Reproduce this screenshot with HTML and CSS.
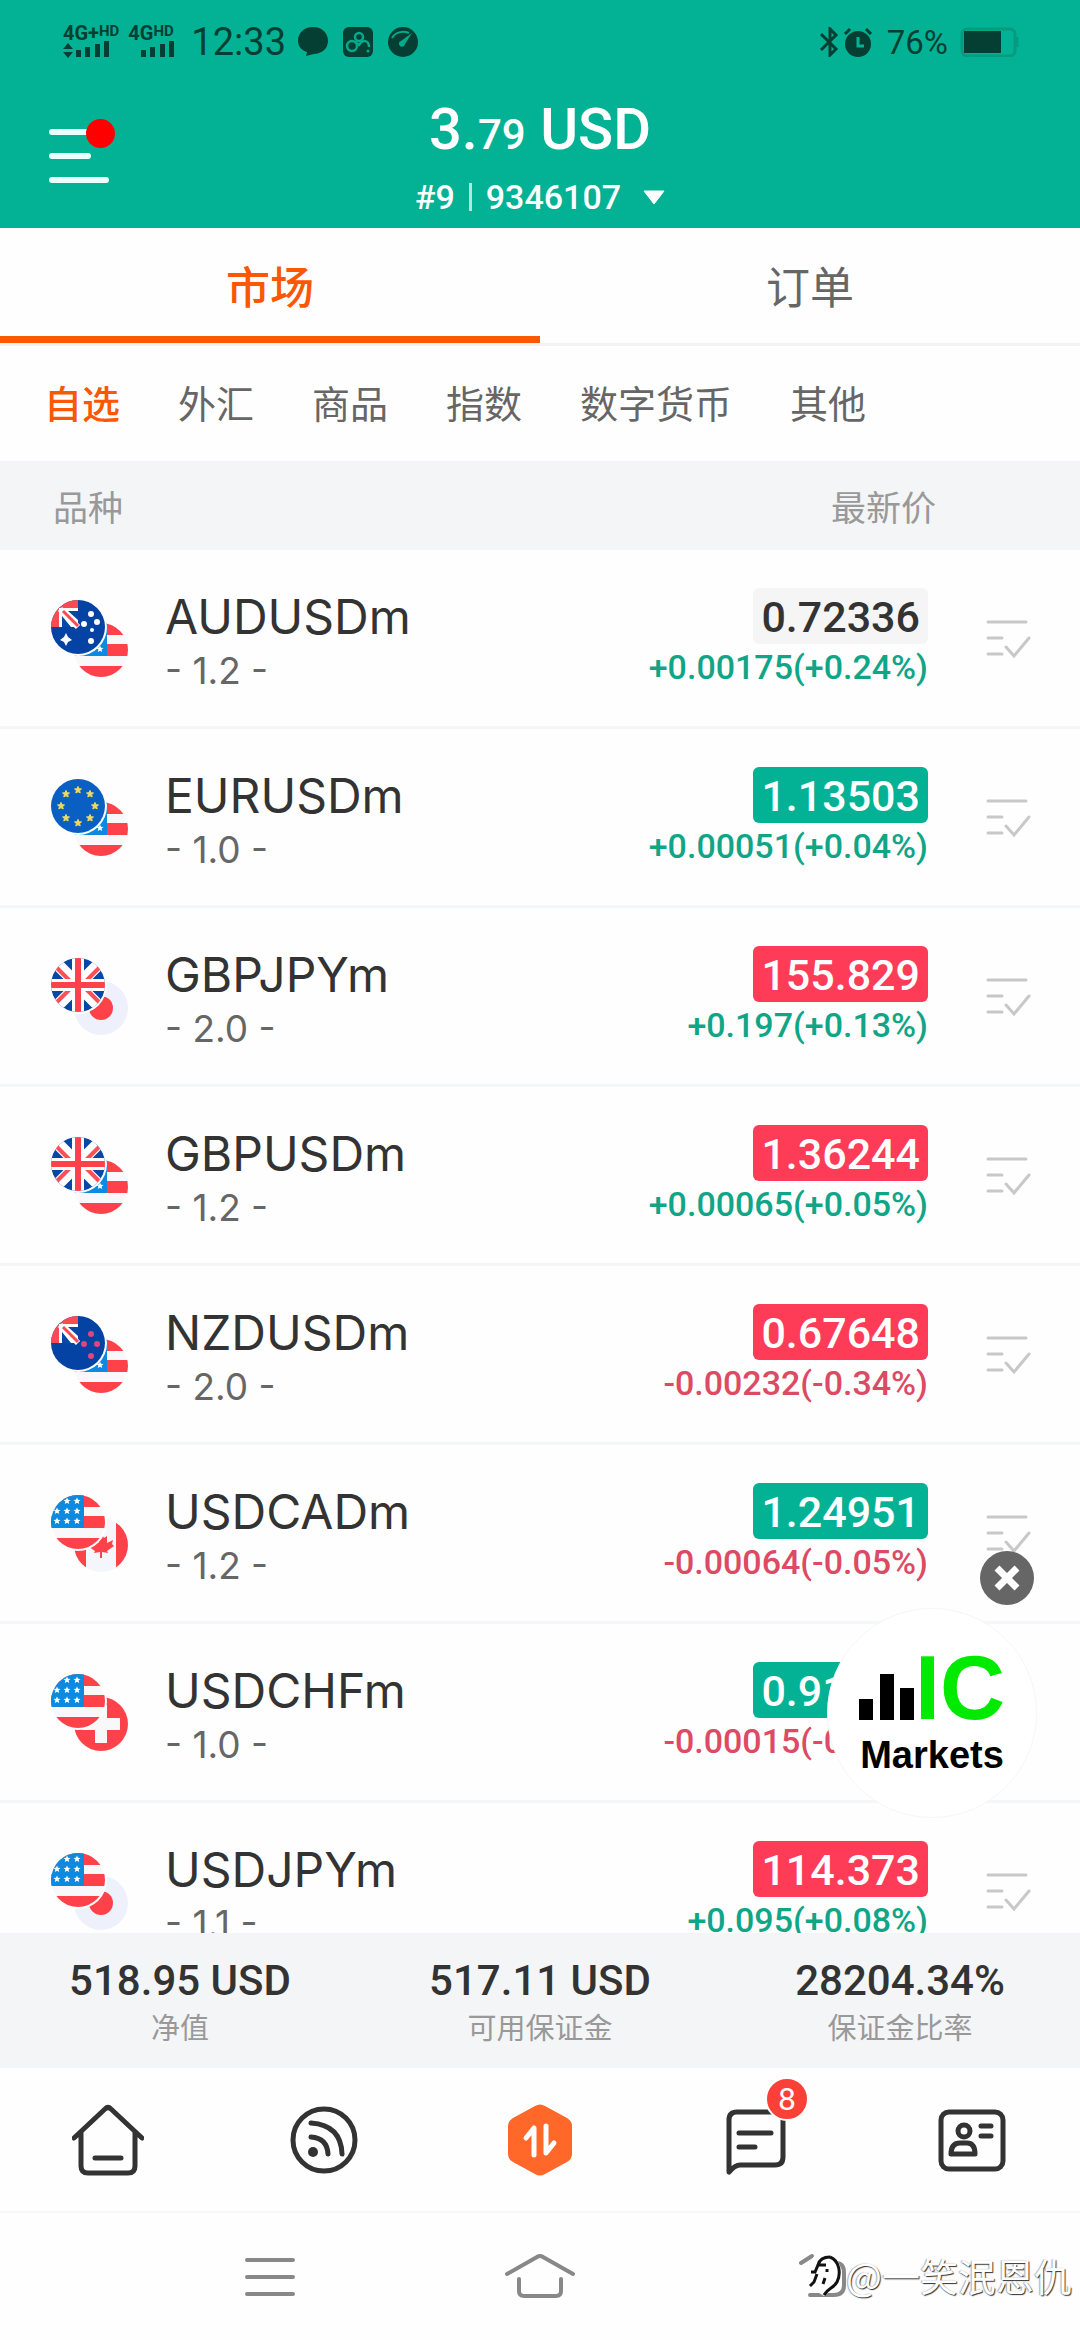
FILE: index.html
```html
<!DOCTYPE html>
<html lang="zh-CN">
<head>
  <meta charset="UTF-8" />
  <meta name="viewport" content="width=device-width, initial-scale=1.0"/>
  <title>市场</title>
  <link rel="stylesheet" href="styles.css">
</head>
<body>
  <!-- banderas e iconos compartidos -->
  <svg class="defs" aria-hidden="true">
    <defs>
      <clipPath id="round"><circle cx="27" cy="27" r="27"/></clipPath>
      <path id="star" d="M0 -3.6 L1 -1.2 L3.5 -1.1 L1.6 .6 L2.2 3 L0 1.7 L-2.2 3 L-1.6 .6 L-3.5 -1.1 L-1 -1.2Z"/>
      <symbol id="us" viewBox="0 0 54 54">
        <g clip-path="url(#round)">
          <rect width="54" height="54" fill="#f8f8fb"/>
          <path d="M0 0H54V12H0Z M0 21H54V33H0Z M0 43H54V54H0Z" fill="#ff4249"/>
          <rect width="33" height="33" fill="#0d8ae0"/>
          <g fill="#fff">
            <use href="#star" x="16" y="6"/><use href="#star" x="26" y="6"/>
            <use href="#star" x="6" y="16"/><use href="#star" x="16" y="16"/><use href="#star" x="26" y="16"/>
            <use href="#star" x="6" y="26"/><use href="#star" x="16" y="26"/><use href="#star" x="26" y="26"/>
          </g>
        </g>
      </symbol>
      <symbol id="gb" viewBox="0 0 54 54">
        <g clip-path="url(#round)">
          <rect width="54" height="54" fill="#0747a6"/>
          <path d="M0 0L54 54M54 0L0 54" stroke="#fff" stroke-width="12"/>
          <path d="M4 8L22 26M50 8L32 26M4 46L22 28M50 46L32 28" stroke="#fb5058" stroke-width="4"/>
          <path d="M27 0V54M0 27H54" stroke="#fff" stroke-width="12"/>
          <path d="M27 0V54M0 27H54" stroke="#ff4249" stroke-width="6"/>
        </g>
      </symbol>
      <g id="jack">
        <rect width="27" height="27" fill="#fb4a54"/>
        <rect x="8" y="8" width="19" height="19" fill="#fff"/>
        <path d="M17 11H27V20Z M11 16V27H20Z" fill="#0747a6"/>
        <path d="M9 9L27 27" stroke="#fff" stroke-width="6"/>
        <path d="M12 11L27 26" stroke="#fb4a54" stroke-width="3"/>
      </g>
      <symbol id="au" viewBox="0 0 54 54">
        <g clip-path="url(#round)">
          <rect width="54" height="54" fill="#0443a4"/>
          <use href="#jack"/>
          <path d="M15 33L17 37L21 40L17 42L15 46L13 42L9 40L13 37Z" fill="#fff"/>
          <g fill="#fff"><circle cx="40" cy="14" r="3"/><circle cx="46" cy="22" r="3"/><circle cx="33" cy="24" r="3"/><circle cx="41" cy="30" r="2"/><circle cx="40" cy="41" r="3"/></g>
        </g>
      </symbol>
      <symbol id="nz" viewBox="0 0 54 54">
        <g clip-path="url(#round)">
          <rect width="54" height="54" fill="#0443a4"/>
          <use href="#jack"/>
          <g fill="#e0457b"><circle cx="40" cy="18" r="3"/><circle cx="33" cy="28" r="3"/><circle cx="46" cy="28" r="3"/><circle cx="40" cy="40" r="3"/></g>
        </g>
      </symbol>
      <symbol id="eu" viewBox="0 0 54 54">
        <circle cx="27" cy="27" r="27" fill="#0a60c2"/>
        <g fill="#f1dc55" stroke="#f1dc55">
          <use href="#star" x="27" y="11"/><use href="#star" x="39" y="15"/><use href="#star" x="44" y="27"/><use href="#star" x="39" y="39"/>
          <use href="#star" x="27" y="44"/><use href="#star" x="15" y="39"/><use href="#star" x="10" y="27"/><use href="#star" x="15" y="15"/>
        </g>
      </symbol>
      <symbol id="jp" viewBox="0 0 54 54">
        <circle cx="27" cy="27" r="27" fill="#eef1fb"/>
        <circle cx="27" cy="27" r="12" fill="#ff4249"/>
      </symbol>
      <symbol id="ca" viewBox="0 0 54 54">
        <g clip-path="url(#round)">
          <rect width="54" height="54" fill="#f5f6fb"/>
          <path d="M0 0H12V54H0Z M42 0H54V54H42Z" fill="#ff4249"/>
          <path d="M27 15L30 20L33 18L33 25L39 22L38 26L40 28L33 33L34 35L28 34V40H26V34L20 35L21 33L14 28L16 26L15 22L21 25L21 18L24 20Z" fill="#ff4249"/>
        </g>
      </symbol>
      <symbol id="ch" viewBox="0 0 54 54">
        <circle cx="27" cy="27" r="27" fill="#ff4249"/>
        <path d="M21 8H33V21H46V33H33V46H21V33H8V21H21Z" fill="#f8f8fb"/>
      </symbol>
      <symbol id="check" viewBox="0 0 46 40">
        <path d="M2 3H40M2 19H16M2 35H16M20 28L28 37L43 19" fill="none" stroke="#c8c8c8" stroke-width="3" stroke-linecap="round"/>
      </symbol>
    </defs>
  </svg>

  <header class="top">
    <div class="status">
      <div class="signal">
        <span class="net">4G+<small>HD</small></span>
        <svg width="48" height="18" viewBox="0 0 48 18"><path d="M0 8L5 2L10 8Z M0 11L5 17L10 11Z M13 9H18V16H13Z M22 6H27V16H22Z M32 3H37V16H32Z M41 0H46V16H41Z" fill="#053f33"/></svg>
      </div>
      <div class="signal">
        <span class="net">4G<small>HD</small></span>
        <svg width="48" height="18" viewBox="0 0 48 18"><path d="M13 9H18V16H13Z M22 6H27V16H22Z M32 3H37V16H32Z M41 0H46V16H41Z" fill="#053f33"/></svg>
      </div>
      <span class="time">12:33</span>
      <svg class="st-ico" viewBox="0 0 30 30"><path d="M15 0C24 0 30 6 30 14C30 22 23 27 16 27L8 29L9 25C3 23 0 19 0 14C0 6 6 0 15 0Z" fill="#053f33"/></svg>
      <svg class="st-ico" viewBox="0 0 30 30"><rect width="30" height="30" rx="6" fill="#053f33"/><g fill="none" stroke="#05a98b" stroke-width="2.500"><circle cx="9" cy="19" r="5"/><circle cx="16" cy="10" r="4"/><path d="M12 15L16 18C20 11 26 14 26 20"/></g><circle cx="25" cy="24" r="1.500" fill="#05a98b"/></svg>
      <svg class="st-ico" viewBox="0 0 30 30"><circle cx="15" cy="15" r="15" fill="#053f33"/><path d="M4 11C8 4 16 4 21 6" fill="none" stroke="#05a98b" stroke-width="2"/><path d="M24 6L17 17A3 3 0 1 1 13 14Z" fill="#05a98b"/></svg>
      <span class="grow"></span>
      <svg width="20" height="30" viewBox="0 0 20 30"><path d="M2 7L17 22L11 28V2L17 8L2 23" fill="none" stroke="#053f33" stroke-width="3"/></svg>
      <svg width="30" height="30" viewBox="0 0 30 30"><circle cx="15" cy="17" r="13" fill="#053f33"/><path d="M2 7L7 2M28 7L23 2" stroke="#053f33" stroke-width="3"/><path d="M15 10V19H21" fill="none" stroke="#05b294" stroke-width="3"/></svg>
      <span class="percent">76%</span>
      <svg width="60" height="30" viewBox="0 0 60 30"><rect x="2" y="2" width="53" height="27" rx="5" fill="none" stroke="#079a7e" stroke-width="3"/><path d="M57 10V20" stroke="#079a7e" stroke-width="3"/><rect x="4" y="4" width="37" height="22" fill="#053f33"/></svg>
    </div>
    <div class="account">
      <button class="menu" aria-label="菜单"><i></i><i class="short"></i><i></i></button>
      <div class="balance">3.<small>79</small> USD</div>
      <button class="login"><span>#9</span><b></b><span>9346107</span><svg width="22" height="15" viewBox="0 0 22 15"><path d="M1 1H21L11 14Z" fill="#fff" stroke="#fff"/></svg></button>
    </div>
  </header>

  <nav class="tabs">
    <button class="active">市场</button>
    <button>订单</button>
  </nav>
  <nav class="cats">
    <button class="active">自选</button>
    <button>外汇</button>
    <button>商品</button>
    <button>指数</button>
    <button>数字货币</button>
    <button>其他</button>
  </nav>

  <main class="market">
    <div class="scroll">
      <table class="quotes">
        <thead>
          <tr><th>品种</th><th class="last" colspan="2">最新价</th></tr>
        </thead>
        <tbody>
          <tr>
            <td><div class="pair"><svg class="flags" viewBox="0 0 78 78"><use href="#us" x="23" y="23" width="54" height="54"/><circle cx="27" cy="27" r="29" fill="#fff"/><use href="#au" width="54" height="54"/></svg><div><div class="name">AUDUSDm</div><div class="spread">- 1.2 -</div></div></div></td>
            <td class="num"><span class="price flat">0.72336</span><div class="change green">+0.00175(+0.24%)</div></td>
            <td class="act"><button aria-label="AUDUSDm"><svg width="46" height="40"><use href="#check"/></svg></button></td>
          </tr>
          <tr>
            <td><div class="pair"><svg class="flags" viewBox="0 0 78 78"><use href="#us" x="23" y="23" width="54" height="54"/><circle cx="27" cy="27" r="29" fill="#fff"/><use href="#eu" width="54" height="54"/></svg><div><div class="name">EURUSDm</div><div class="spread">- 1.0 -</div></div></div></td>
            <td class="num"><span class="price up">1.13503</span><div class="change green">+0.00051(+0.04%)</div></td>
            <td class="act"><button aria-label="EURUSDm"><svg width="46" height="40"><use href="#check"/></svg></button></td>
          </tr>
          <tr>
            <td><div class="pair"><svg class="flags" viewBox="0 0 78 78"><use href="#jp" x="23" y="23" width="54" height="54"/><circle cx="27" cy="27" r="29" fill="#fff"/><use href="#gb" width="54" height="54"/></svg><div><div class="name">GBPJPYm</div><div class="spread">- 2.0 -</div></div></div></td>
            <td class="num"><span class="price down">155.829</span><div class="change green">+0.197(+0.13%)</div></td>
            <td class="act"><button aria-label="GBPJPYm"><svg width="46" height="40"><use href="#check"/></svg></button></td>
          </tr>
          <tr>
            <td><div class="pair"><svg class="flags" viewBox="0 0 78 78"><use href="#us" x="23" y="23" width="54" height="54"/><circle cx="27" cy="27" r="29" fill="#fff"/><use href="#gb" width="54" height="54"/></svg><div><div class="name">GBPUSDm</div><div class="spread">- 1.2 -</div></div></div></td>
            <td class="num"><span class="price down">1.36244</span><div class="change green">+0.00065(+0.05%)</div></td>
            <td class="act"><button aria-label="GBPUSDm"><svg width="46" height="40"><use href="#check"/></svg></button></td>
          </tr>
          <tr>
            <td><div class="pair"><svg class="flags" viewBox="0 0 78 78"><use href="#us" x="23" y="23" width="54" height="54"/><circle cx="27" cy="27" r="29" fill="#fff"/><use href="#nz" width="54" height="54"/></svg><div><div class="name">NZDUSDm</div><div class="spread">- 2.0 -</div></div></div></td>
            <td class="num"><span class="price down">0.67648</span><div class="change red">-0.00232(-0.34%)</div></td>
            <td class="act"><button aria-label="NZDUSDm"><svg width="46" height="40"><use href="#check"/></svg></button></td>
          </tr>
          <tr>
            <td><div class="pair"><svg class="flags" viewBox="0 0 78 78"><use href="#ca" x="23" y="23" width="54" height="54"/><circle cx="27" cy="27" r="29" fill="#fff"/><use href="#us" width="54" height="54"/></svg><div><div class="name">USDCADm</div><div class="spread">- 1.2 -</div></div></div></td>
            <td class="num"><span class="price up">1.24951</span><div class="change red">-0.00064(-0.05%)</div></td>
            <td class="act"><button aria-label="USDCADm"><svg width="46" height="40"><use href="#check"/></svg></button></td>
          </tr>
          <tr>
            <td><div class="pair"><svg class="flags" viewBox="0 0 78 78"><use href="#ch" x="23" y="23" width="54" height="54"/><circle cx="27" cy="27" r="29" fill="#fff"/><use href="#us" width="54" height="54"/></svg><div><div class="name">USDCHFm</div><div class="spread">- 1.0 -</div></div></div></td>
            <td class="num"><span class="price up">0.91000</span><div class="change red">-0.00015(-0.02%)</div></td>
            <td class="act"><button aria-label="USDCHFm"><svg width="46" height="40"><use href="#check"/></svg></button></td>
          </tr>
          <tr>
            <td><div class="pair"><svg class="flags" viewBox="0 0 78 78"><use href="#jp" x="23" y="23" width="54" height="54"/><circle cx="27" cy="27" r="29" fill="#fff"/><use href="#us" width="54" height="54"/></svg><div><div class="name">USDJPYm</div><div class="spread">- 1.1 -</div></div></div></td>
            <td class="num"><span class="price down">114.373</span><div class="change green">+0.095(+0.08%)</div></td>
            <td class="act"><button aria-label="USDJPYm"><svg width="46" height="40"><use href="#check"/></svg></button></td>
          </tr>
        </tbody>
      </table>
    </div>

    <div class="promo">
      <button class="close" aria-label="关闭"><svg width="54" height="54" viewBox="0 0 54 54"><circle cx="27" cy="27" r="27" fill="#666"/><path d="M17 17L37 37M37 17L17 37" stroke="#fff" stroke-width="7"/></svg></button>
      <a class="logo" href="#">
        <span class="mark"><svg width="56" height="46" viewBox="0 0 56 46"><path d="M0 25H14V46H0Z M21 0H35V46H21Z M41 14H55V46H41Z"/></svg><span class="ic">IC</span></span>
        <span class="brand">Markets</span>
      </a>
    </div>
  </main>

  <section class="summary">
    <div><strong>518.95 USD</strong><span>净值</span></div>
    <div><strong>517.11 USD</strong><span>可用保证金</span></div>
    <div><strong>28204.34%</strong><span>保证金比率</span></div>
  </section>

  <nav class="bottom">
    <a href="#" aria-label="首页"><svg viewBox="0 0 72 72"><path d="M2 34L33 5Q36 2 39 5L70 34M9 28V62Q9 69 16 69H56Q63 69 63 62V28M23 54H49" class="line"/></svg></a>
    <a href="#" aria-label="资讯"><svg viewBox="0 0 72 72"><circle cx="36" cy="36" r="31" class="line"/><path d="M23 19Q53 21 54 50M23 33Q39 34 40 50" class="line"/><circle cx="25" cy="48" r="5" fill="#333"/></svg></a>
    <a href="#" aria-label="交易"><svg viewBox="0 0 72 72"><path d="M31 2Q36 -1 41 2L63 14Q68 17 68 22V50Q68 55 63 58L41 70Q36 73 31 70L9 58Q4 55 4 50V22Q4 17 9 14Z" fill="#ff6829"/><path d="M22 34L30 24V51M42 22V49L50 39" fill="none" stroke="#fff" stroke-width="5" stroke-linecap="round" stroke-linejoin="round"/></svg></a>
    <a href="#" aria-label="消息"><svg viewBox="0 0 72 72"><path d="M9 68V16Q9 8 17 8H55Q63 8 63 16V53Q63 61 55 61H20Q15 61 9 68Z M19 29H51M19 43H35" class="line"/></svg><span class="badge">8</span></a>
    <a href="#" aria-label="我的"><svg viewBox="0 0 72 72"><rect x="5" y="8" width="62" height="57" rx="8" class="line"/><path d="M45 22H55M45 32H55M15 50Q15 39 24 39H31Q39 39 39 50Z" class="line"/><circle cx="28" cy="27" r="6" class="line"/></svg></a>
  </nav>

  <footer class="sysnav">
    <button aria-label="最近"><svg viewBox="0 0 72 48"><path d="M13 7H59M13 24H59M13 41H59" class="thin"/></svg></button>
    <button aria-label="主页"><svg viewBox="0 0 72 48"><path d="M3 21L33 4Q36 2 39 4L69 21M15 26V38Q15 43 20 43H52Q57 43 57 38V26" class="thin"/></svg></button>
    <button aria-label="返回"><svg viewBox="0 0 72 48"><path d="M38 3L27 10M54 10H62Q70 10 70 20V32Q70 42 60 42H36" class="thin"/></svg></button>
    <div class="watermark"><svg width="40" height="46" viewBox="0 0 40 46"><path d="M7 5Q20 0 30 7Q38 16 33 30Q28 38 18 44L8 38Z" fill="#fff"/><path d="M24 5C34 9 35 22 31 30C28 36 22 36 18 43" fill="none" stroke="#111" stroke-width="3"/><path d="M24 5Q14 5 12 13L9 20H5M20 13H12M11 22L8 30L4 34M21 17L21 20M19 26L17 32" fill="none" stroke="#111" stroke-width="3"/></svg>@一笑泯恩仇</div>
  </footer>
</body>
</html>
```

FILE: styles.css
```css
* {
  box-sizing: border-box;
}
body {
  margin: 0;
  height: 100vh;
  display: flex;
  flex-direction: column;
  background-color: #fefefe;
  color: #333;
  font-family: Roboto, 'Noto Sans CJK SC', sans-serif;
}
button {
  background: none;
  border: none;
  padding: 0;
  margin: 0;
  color: inherit;
  font: inherit;
  cursor: pointer;
}
a {
  color: inherit;
  text-decoration: none;
}
svg {
  display: block;
  flex: none;
}
.defs {
  position: absolute;
  width: 0;
  height: 0;
}

/* cabecera */
.top {
  height: 228px;
  background-color: #03b294;
  color: #fff;
}
.status {
  display: flex;
  align-items: center;
  height: 84px;
  padding: 0 60px 0 63px;
  color: #053f33;
}
.signal {
  margin-right: 9px;
}
.signal svg {
  margin-top: -1px;
}
.net {
  display: flex;
  font-size: 20px;
  line-height: 17px;
  font-weight: 700;
}
.net small {
  font-size: 15px;
  line-height: 13px;
}
.time {
  margin-right: 12px;
  margin-left: 6px;
  font-size: 38px;
}
.st-ico {
  width: 30px;
  height: 30px;
  margin-right: 15px;
}
.grow {
  flex: 1;
}
.status > svg:not(.st-ico) {
  margin-left: 4px;
}
.percent {
  margin: 0 8px 0 14px;
  font-size: 33px;
}
.account {
  position: relative;
  display: flex;
  flex-direction: column;
  align-items: center;
}
.menu {
  position: absolute;
  left: 49px;
  top: 45px;
  width: 60px;
  display: grid;
  gap: 18px;
}
.menu i {
  height: 6px;
  border-radius: 3px;
  background-color: #e8fffb;
}
.menu .short {
  width: 42px;
}
.menu::after {
  content: "";
  position: absolute;
  right: -6px;
  top: -10px;
  width: 29px;
  height: 29px;
  border-radius: 50%;
  background-color: #f00;
}
.balance {
  font-size: 58px;
  line-height: 90px;
  font-weight: 500;
}
.balance small {
  font-size: 42px;
}
.login {
  display: flex;
  align-items: center;
  gap: 14px;
  height: 34px;
  font-size: 34px;
  line-height: 34px;
  font-weight: 500;
}
.login b {
  width: 3px;
  height: 28px;
  background-color: #aeeadf;
}
.login svg {
  margin-left: 8px;
}

/* pestañas */
.tabs {
  display: flex;
  height: 118px;
  border-bottom: 3px solid #f2f3f4;
}
.tabs button {
  flex: 1;
  padding-top: 6px;
  border-bottom: 7px solid transparent;
  font-size: 44px;
  color: #666;
}
.tabs .active {
  border-color: #fb5705;
  color: #fb5705;
  font-weight: 500;
}
.cats {
  display: flex;
  gap: 58px;
  height: 115px;
  padding: 0 44px 4px;
  font-size: 38px;
  color: #666;
}
.cats .active {
  color: #fb5705;
  font-weight: 500;
}

/* cotizaciones */
.market {
  position: relative;
  flex: 1;
  min-height: 0;
}
.scroll {
  height: 100%;
  overflow: hidden;
}
.quotes {
  width: 100%;
  border-collapse: separate;
  border-spacing: 0;
}
.quotes th {
  height: 89px;
  padding: 0 0 0 53px;
  background-color: #f4f5f7;
  color: #999;
  font-size: 35px;
  font-weight: 400;
  text-align: left;
}
.quotes .last {
  padding: 0 144px 0 0;
  text-align: right;
}
.quotes td {
  height: 179px;
  padding: 38px 0 0;
  border-bottom: 3px solid #f5f6f7;
  vertical-align: top;
}
.pair {
  display: flex;
  gap: 36px;
  padding-left: 51px;
}
.flags {
  width: 78px;
  height: 78px;
  margin-top: 12px;
}
.name {
  font-family: Inter, sans-serif;
  font-size: 48px;
  line-height: 58px;
}
.spread {
  font-family: Inter, sans-serif;
  font-size: 37px;
  line-height: 50px;
  color: #666;
}
.quotes .num {
  text-align: right;
}
.price {
  display: inline-block;
  height: 56px;
  padding: 0 8px;
  border-radius: 6px;
  font-size: 43px;
  line-height: 58px;
  font-weight: 500;
  color: #fff;
  vertical-align: top;
}
.flat {
  background-color: #f5f5f5;
  color: #333;
}
.up {
  background-color: #03b294;
}
.down {
  background-color: #fe3c58;
}
.change {
  font-size: 34px;
  line-height: 46px;
  font-weight: 500;
}
.green {
  color: #10a586;
}
.red {
  color: #dc4a63;
}
.quotes .act {
  width: 152px;
  padding-left: 58px;
  padding-top: 69px;
}
.act button {
  display: block;
}

/* anuncio flotante */
.promo {
  position: absolute;
  right: 43px;
  bottom: 115px;
}
.close {
  position: absolute;
  right: 3px;
  top: -57px;
}
.logo {
  display: flex;
  flex-direction: column;
  align-items: center;
  width: 210px;
  height: 210px;
  padding-top: 46px;
  border: 1px solid #f6f6f6;
  border-radius: 50%;
  background-color: #fff;
  color: #000;
  font-family: "Liberation Sans", sans-serif;
  font-weight: 700;
}
.mark {
  display: flex;
  align-items: flex-end;
}
.mark svg {
  margin-bottom: 1px;
}
.ic {
  color: #00ea00;
  font-size: 90px;
  line-height: 66px;
}
.brand {
  margin-top: 12px;
  font-size: 38px;
  line-height: 44px;
}

/* resumen */
.summary {
  display: grid;
  grid-template-columns: repeat(3, 1fr);
  height: 135px;
  padding-top: 22px;
  background-color: #f4f5f7;
  text-align: center;
}
.summary strong {
  display: block;
  font-size: 42px;
  line-height: 52px;
  font-weight: 500;
}
.summary span {
  display: block;
  color: #999;
  font-size: 29px;
  line-height: 44px;
}

/* barra inferior */
.bottom {
  display: flex;
  height: 145px;
  border-bottom: 2px solid #f8f8f8;
}
.bottom a {
  position: relative;
  flex: 1;
  display: flex;
  justify-content: center;
  align-items: center;
}
.bottom svg {
  width: 72px;
  height: 72px;
}
.line {
  fill: none;
  stroke: #333;
  stroke-width: 5;
  stroke-linecap: round;
  stroke-linejoin: round;
}
.badge {
  position: absolute;
  left: 50%;
  top: 9px;
  width: 44px;
  height: 44px;
  margin-left: 9px;
  border: 2px solid #fff;
  border-radius: 50%;
  background-color: #fb4137;
  color: #fff;
  font-size: 32px;
  line-height: 40px;
  text-align: center;
}
.sysnav {
  position: relative;
  display: flex;
  height: 127px;
  padding: 0 135px;
}
.sysnav button {
  flex: 1;
  display: flex;
  justify-content: center;
  align-items: center;
}
.sysnav button svg {
  width: 72px;
  height: 48px;
}
.thin {
  fill: none;
  stroke: #888;
  stroke-width: 4;
  stroke-linecap: round;
}
.watermark {
  position: absolute;
  right: 8px;
  top: 36px;
  display: flex;
  align-items: center;
  font-family: 'Noto Sans CJK SC', sans-serif;
  font-size: 38px;
  line-height: 52px;
  font-weight: 400;
  color: #fff;
  text-shadow: 1px 1px 1px #333, -1px 0 1px #aaa;
}
```
